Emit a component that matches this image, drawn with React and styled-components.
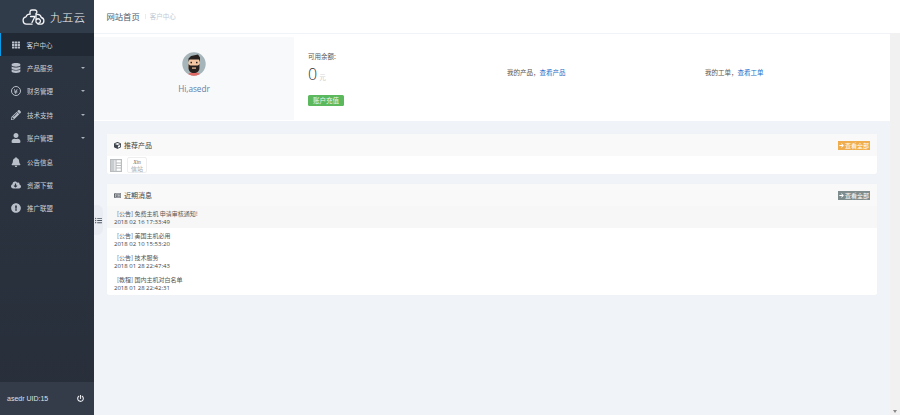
import React from "react";
import styled, { createGlobalStyle } from "styled-components";
import { FaPencilAlt, FaUser, FaBell, FaCloudDownloadAlt, FaExclamationCircle, FaCube, FaArrowRight, FaPowerOff, FaRegNewspaper, FaDatabase, FaYenSign, FaTh, FaListUl } from "react-icons/fa";

const Global = createGlobalStyle`
  html, body { margin: 0; padding: 0; height: 100%; overflow: hidden; }
  #root { height: 415px; }
  * { box-sizing: border-box; }
  body { font-family: "Open Sans", "Noto Sans CJK SC", sans-serif; background: #f0f3f8; }
`;
const Shell = styled.div`display: flex; width: 900px; height: 415px; position: relative; background: #f0f3f8;`;
const Sidebar = styled.aside`width: 94px; flex: none; display: flex; flex-direction: column; background: linear-gradient(#2c3542, #282f3b);`;
const Logo = styled.div`height: 33px; display: flex; align-items: center; padding-left: 22px; gap: 4px; background: #313c4a; color: #eef1f4; font-size: 11.7px; font-family: "Noto Sans CJK SC", sans-serif; font-weight: 300;`;
const Nav = styled.nav`flex: 1; display: flex; flex-direction: column;`;
const NavItem = styled.div`
  height: 23.4px; display: flex; align-items: center; padding-left: ${p => p.$active ? "9.5px" : "11px"}; color: #cdd2d9; font-size: 6.5px;
  font-family: "Noto Sans CJK SC", sans-serif;
  background: ${p => p.$active ? "#212934" : "transparent"};
  border-left: ${p => p.$active ? "1.5px solid #0a9be8" : "none"};
`;
const NavIcon = styled.span`width: 16px; flex: none; display: flex; align-items: center; color: #b9c0ca; font-size: ${p => p.$size || 10}px; padding-left: ${p => p.$inset || 0}px; svg { display: block; }`;
const YenRing = styled.span`width: 10px; height: 10px; border: 1px solid #b9c0ca; border-radius: 50%; display: flex; align-items: center; justify-content: center; svg { font-size: 5.5px; }`;
const NavText = styled.span`flex: 1;`;
const Caret = styled.i`width: 0; height: 0; margin-right: 9px; border-left: 2px solid transparent; border-right: 2px solid transparent; border-top: 2px solid #aab2bc;`;
const Foot = styled.div`height: 33px; display: flex; align-items: center; justify-content: space-between; padding: 0 10px 0 7px; background: #343c4a; color: #dde1e6; font-size: 7px; font-family: "Liberation Sans", sans-serif; svg { font-size: 7px; color: #e8eaee; }`;
const Main = styled.main`flex: 1; min-width: 0; display: flex; flex-direction: column;`;
const TopBar = styled.header`height: 33px; background: #fff; display: flex; align-items: center; padding: 0 0 1px 12.5px; font-family: "Noto Sans CJK SC", sans-serif;`;
const Crumb = styled.span`font-size: 8.3px; color: #4a5a6c;`;
const SubCrumb = styled.span`font-size: 6.5px; color: #c4cad2; margin-left: 5px; padding-left: 5px; position: relative; &::before { content: ""; position: absolute; left: 0; top: 3px; bottom: 2px; width: 1px; background: #e8ebef; }`;
const Hero = styled.section`height: 87px; margin-top: 1px; width: 796px; display: flex; background: #fff; font-family: "Noto Sans CJK SC", sans-serif;`;
const Profile = styled.div`width: 200px; height: 83px; margin-top: 3px; background: #f8f9fb; display: flex; flex-direction: column; align-items: center; padding-top: 15px; gap: 7px;`;
const HiName = styled.div`font-size: 8.2px; line-height: 11px; color: #5f80a8; font-family: "Open Sans", sans-serif;`;
const Stats = styled.div`flex: 1; display: grid; grid-template-columns: 198px 198px 1fr; padding: 16px 0 0 14px; position: relative;`;
const Balance = styled.div`display: flex; flex-direction: column; align-items: flex-start;`;
const Label = styled.div`font-size: 6.5px; line-height: 12px; color: #555;`;
const Amount = styled.div`font-size: 16px; line-height: 20px; margin-top: 2px; color: #333; font-family: "Open Sans", sans-serif; font-weight: 300; small { font-size: 6.5px; color: #aaa; margin-left: 2px; font-family: "Noto Sans CJK SC", sans-serif; }`;
const Recharge = styled.div`margin-top: 8px; width: 36px; height: 11px; border-radius: 1.5px; background: #5cb85c; color: #eaf6ea; font-size: 6.5px; line-height: 11px; text-align: center;`;
const LinkRow = styled.div`font-size: 6.5px; color: #555; padding: 16px 0 0 1px; line-height: 12px; a { color: #1a6fc9; text-decoration: none; }`;
const Cards = styled.div`width: 770px; margin: 13px 0 0 13px; display: flex; flex-direction: column; gap: 10px; font-family: "Noto Sans CJK SC", sans-serif;`;
const Card = styled.section`background: #fff; border-radius: 2px; box-shadow: 0 0 1px rgba(0,0,0,.06); padding-bottom: ${p => p.$pad || 0}px;`;
const CardHead = styled.div`height: 22px; background: #f9f9f9; display: flex; align-items: center; padding: 0 7px; font-size: 7px; color: #555; gap: 3px; svg { font-size: 7px; color: #3f454c; }`;
const CardTitle = styled.span`flex: 1; color: #444;`;
const Tag = styled.span`background: ${p => p.$bg}; color: #fff; font-size: 6px; line-height: 9px; height: 9px; width: 32px; display: flex; align-items: center; justify-content: center; gap: 1px; svg { font-size: 5px; color: #fff; }`;
const Tiles = styled.div`height: 18px; display: flex; align-items: flex-start; padding: 1px 3px 0; gap: 5px; color: #aeb2b6;`;
const GridTile = styled.div`width: 12px; height: 13px; margin-top: 2px; display: flex; align-items: center; justify-content: center; svg { display: block; }`;
const TextTile = styled.div`width: 20px; height: 16px; border: 1px solid #eee; border-radius: 2px; font-size: 6px; line-height: 6.5px; text-align: center; color: #aaa; padding-top: 1px; i { display: block; font-family: "Liberation Serif", serif; font-size: 5.5px; color: #666; }`;
const Row = styled.div`height: 22px; padding: 3px 7px 0; font-size: 6px; line-height: 9px; color: #555; background: ${p => p.$alt ? "#f7f7f7" : "#fff"};`;
const MsgTitle = styled.div`padding-left: 3px;`;
const Stamp = styled.div`font-family: "Open Sans", sans-serif; font-size: 6px; color: #444;`;
const Toggle = styled.div`position: absolute; left: 94px; top: 205px; width: 9px; height: 30px; background: #e9edf3; border-radius: 0 6px 6px 0; display: flex; align-items: center; justify-content: center; color: #4c5560; svg { font-size: 7px; }`;
const Gutter = styled.div`position: absolute; right: 0; top: 33px; width: 10px; height: 382px; background: #f1f1f1;`;
const ScrollArrow = styled.i`position: absolute; right: 3px; bottom: 2px; width: 0; height: 0; border-left: 2px solid transparent; border-right: 2px solid transparent; border-top: 3px solid #8a8a8a;`;

const CloudLogo = () => (
  <svg width="24" height="16" viewBox="0 0 24 16" fill="none" stroke="#f3f5f7" strokeWidth="1.3" strokeLinecap="round" strokeLinejoin="round">
    <path d="M10 15.200H4.500a3.700 3.700 0 0 1-.5-7.300A4 4 0 0 1 8 5.200" />
    <path d="M8 5V2.800A2 2 0 0 1 10 1h3a2 2 0 0 1 1.500 3.200" />
    <path d="M14.800 5.500a4 4 0 0 1 4.500 3 3.500 3.500 0 0 1 .2 6.700H16" />
    <path d="M8.500 7.500H13L10 13.500" />
    <path d="M14 4.500v8.500a2.300 2.300 0 1 0 .4-2.500" />
  </svg>
);
const Avatar = () => (
  <svg width="24" height="24" viewBox="0 0 24 24">
    <circle cx="12" cy="12" r="11.700" fill="#a5b5b9" />
    <clipPath id="av"><circle cx="12" cy="12" r="11.700" /></clipPath>
    <g clipPath="url(#av)">
      <path d="M5 24c1-3 4-4 7-4s6 1 7 4z" fill="#e06a66" />
      <rect x="6.500" y="6" width="11" height="13" rx="4" fill="#f4c6a2" />
      <path d="M6.500 12c0 0 1 1.500 2 1.500h7c1 0 2-1.500 2-1.500v4c0 3-2.500 5-5.500 5s-5.500-2-5.500-5z" fill="#26211e" />
      <rect x="10" y="15.500" width="4" height="1.200" fill="#f4c6a2" />
      <path d="M6.500 10V6.500L9 4l7-1.500 2 3V10l-1-2.500H7.500z" fill="#26211e" />
      <rect x="8.500" y="9.800" width="1.500" height="1.500" fill="#26211e" />
      <rect x="14" y="9.800" width="1.500" height="1.500" fill="#26211e" />
    </g>
  </svg>
);
const Ledger = () => (
  <svg width="12" height="13" viewBox="0 0 12 13" fill="none" stroke="#b9bcbf" strokeWidth="1.2">
    <rect x=".6" y=".6" width="10.800" height="11.800" />
    <rect x="1" y="1" width="3.500" height="11" fill="#c9cccf" stroke="none" />
    <path d="M6 1v11M6 4h5.400M6 6.500h5.400M6 9h5.400" />
  </svg>
);

const navItems = [
  [<FaDatabase key="a" />, "产品服务", true],
  [<YenRing key="b"><FaYenSign /></YenRing>, "财务管理", true],
  [<FaPencilAlt key="c" />, "技术支持", true],
  [<FaUser key="d" />, "账户管理", true],
  [<FaBell key="e" />, "公告信息", false],
  [<FaCloudDownloadAlt key="f" />, "资源下载", false],
  [<FaExclamationCircle key="g" />, "推广联盟", false],
];
const msgs = [
  ["[公告] 免费主机 申请审核通知!", "2018 02 16 17:33:49", true],
  ["[公告] 美国主机必用", "2018 02 10 15:53:20", false],
  ["[公告] 技术服务", "2018 01 28 22:47:43", false],
  ["[教程] 国内主机对白名单", "2018 01 28 22:42:31", false],
];

export default function App() {
  return (
    <Shell>
      <Global />
      <Sidebar>
        <Logo><CloudLogo />九五云</Logo>
        <Nav>
          <NavItem $active><NavIcon $size={8} $inset={1}><FaTh /></NavIcon><NavText>客户中心</NavText></NavItem>
          {navItems.map(([icon, text, caret]) => (
            <NavItem key={text}><NavIcon>{icon}</NavIcon><NavText>{text}</NavText>{caret && <Caret />}</NavItem>
          ))}
        </Nav>
        <Foot>asedr UID:15<FaPowerOff /></Foot>
      </Sidebar>
      <Main>
        <TopBar><Crumb>网站首页</Crumb><SubCrumb>客户中心</SubCrumb></TopBar>
        <Hero>
          <Profile><Avatar /><HiName>Hi,asedr</HiName></Profile>
          <Stats>
            <Balance>
              <Label>可用余额:</Label>
              <Amount>0<small>元</small></Amount>
              <Recharge>账户充值</Recharge>
            </Balance>
            <LinkRow>我的产品，<a>查看产品</a></LinkRow>
            <LinkRow>我的工单，<a>查看工单</a></LinkRow>
          </Stats>
        </Hero>
        <Cards>
          <Card>
            <CardHead><FaCube /><CardTitle>推荐产品</CardTitle><Tag $bg="#f0ad4e"><FaArrowRight />查看全部</Tag></CardHead>
            <Tiles>
              <GridTile><Ledger /></GridTile>
              <TextTile><i>Xin</i>信站</TextTile>
            </Tiles>
          </Card>
          <Card $pad={1}>
            <CardHead><FaRegNewspaper /><CardTitle>近期消息</CardTitle><Tag $bg="#7f8c8d"><FaArrowRight />查看全部</Tag></CardHead>
            {msgs.map(([t, d, alt]) => (
              <Row key={d} $alt={alt}><MsgTitle>{t}</MsgTitle><Stamp>{d}</Stamp></Row>
            ))}
          </Card>
        </Cards>
      </Main>
      <Toggle><FaListUl /></Toggle>
      <Gutter><ScrollArrow /></Gutter>
    </Shell>
  );
}
